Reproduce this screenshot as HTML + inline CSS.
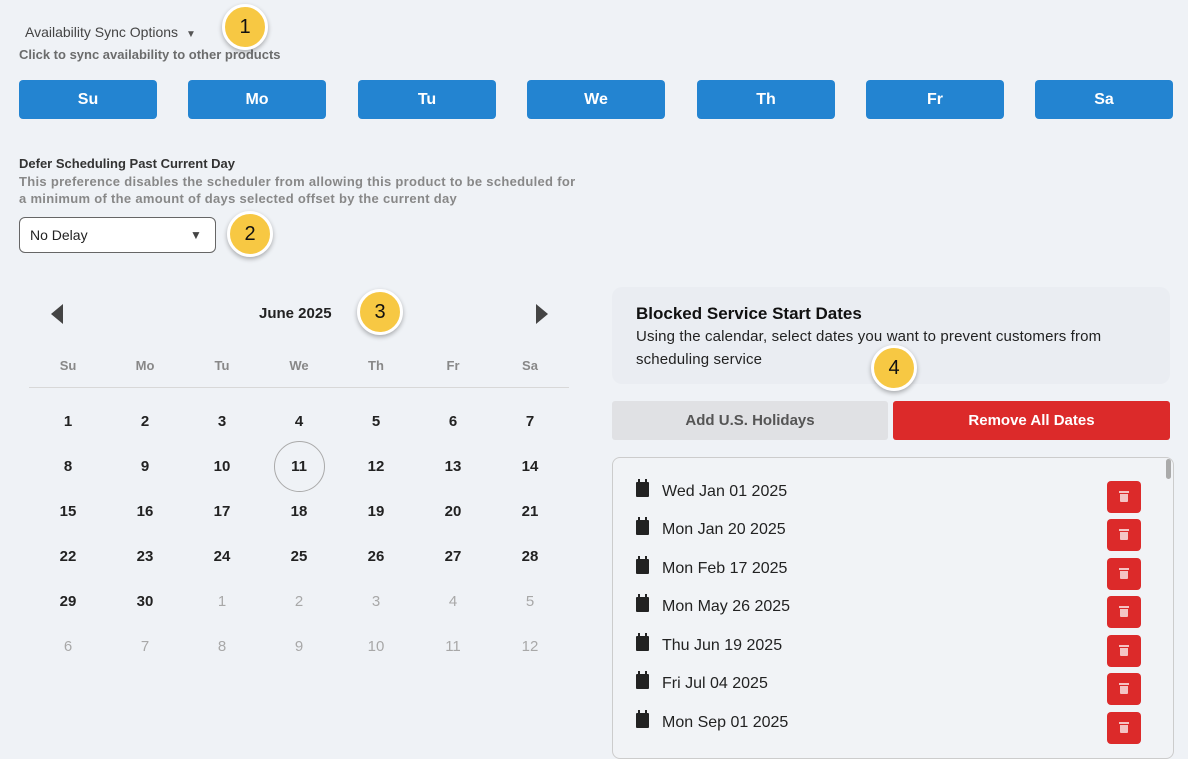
<!DOCTYPE html>
<html><head><style>
body{margin:0;width:1188px;height:749px;background:#eff2f6;font-family:"Liberation Sans",Arial,sans-serif;position:relative;overflow:hidden;color:#222}
.a{position:absolute}
.day{position:absolute;top:80px;width:138px;height:39px;background:#2384d1;border-radius:4px;color:#fff;font-weight:bold;font-size:16px;text-align:center;line-height:40px}
.badge{position:absolute;width:40px;height:40px;border-radius:50%;background:#f7c843;border:3px solid #fff;box-shadow:0 2px 5px rgba(0,0,0,.3);font-size:20px;text-align:center;line-height:40px;color:#111;z-index:5}
.c{position:absolute;width:40px;text-align:center;font-size:15px;font-weight:bold;color:#222}
.g{color:#a8a8a8;font-weight:normal}
.h{color:#888;font-size:13px;font-weight:bold}
.it{position:absolute;left:636px;font-size:16px;color:#222}
.cal{display:inline-block;width:13px;height:12px;background:#222;border-radius:1px;margin-right:13px;position:relative;top:1px;border-top:3px solid #222}
.cal:before,.cal:after{content:"";position:absolute;top:-6px;width:2px;height:4px;background:#222}
.cal:before{left:2px}.cal:after{right:2px}
.tr{position:absolute;left:1107px;width:34px;height:32px;background:#dc2a2a;border-radius:4px}
.tr:before{content:"";position:absolute;left:12px;top:10px;width:10px;height:2px;background:#f4c4c4}
.tr:after{content:"";position:absolute;left:13px;top:13px;width:8px;height:8px;background:#f4c4c4;border-radius:0 0 1px 1px}
</style></head><body>
<div class="a" style="left:25px;top:24px;font-size:14px;color:#444">Availability Sync Options <span style="font-size:10px;color:#555;margin-left:4px">&#9660;</span></div>
<div class="a" style="left:19px;top:47px;font-size:13px;color:#555;font-weight:bold;opacity:.85">Click to sync availability to other products</div>
<div class="day" style="left:19px">Su</div><div class="day" style="left:188px">Mo</div><div class="day" style="left:358px">Tu</div><div class="day" style="left:527px">We</div><div class="day" style="left:697px">Th</div><div class="day" style="left:866px">Fr</div><div class="day" style="left:1035px">Sa</div>
<div class="a" style="left:19px;top:156px;font-size:13px;font-weight:bold;color:#333">Defer Scheduling Past Current Day</div>
<div class="a" style="left:19px;top:173px;font-size:13px;font-weight:bold;color:#888;line-height:17px;letter-spacing:0.3px">This preference disables the scheduler from allowing this product to be scheduled for<br>a minimum of the amount of days selected offset by the current day</div>
<div class="a" style="left:19px;top:217px;width:195px;height:34px;background:#fff;border:1px solid #666;border-radius:6px"><span class="a" style="left:10px;top:9px;font-size:14px;color:#222">No Delay</span><span class="a" style="left:170px;top:10px;font-size:12px;color:#444">&#9660;</span></div>
<div class="badge" style="left:222px;top:4px">1</div>
<div class="badge" style="left:227px;top:211px">2</div>
<div class="badge" style="left:357px;top:289px">3</div>
<div class="badge" style="left:871px;top:345px">4</div>
<svg class="a" style="left:51px;top:304px" width="12" height="20"><path d="M12 0L0 10L12 20Z" fill="#444"/></svg>
<svg class="a" style="left:536px;top:304px" width="12" height="20"><path d="M0 0L12 10L0 20Z" fill="#444"/></svg>
<div class="a" style="left:259px;top:305px;font-size:15px;font-weight:bold">June 2025</div>
<div class="a" style="left:29px;top:387px;width:540px;height:1px;background:#d8d8d8"></div>
<div class="a" style="left:274px;top:441px;width:49px;height:49px;border:1px solid #aaa;border-radius:50%"></div>
<div id="cal"></div>
<div class="a" style="left:612px;top:287px;width:558px;height:97px;background:#eaedf2;border-radius:10px"></div>
<div class="a" style="left:636px;top:304px;font-size:17px;font-weight:bold;color:#111">Blocked Service Start Dates</div>
<div class="a" style="left:636px;top:325px;font-size:15px;color:#222;line-height:23px;letter-spacing:0.15px">Using the calendar, select dates you want to prevent customers from<br>scheduling service</div>
<div class="a" style="left:612px;top:401px;width:276px;height:39px;background:#e0e1e4;border-radius:3px;color:#555;font-weight:bold;font-size:15px;text-align:center;line-height:40px">Add U.S. Holidays</div>
<div class="a" style="left:893px;top:401px;width:277px;height:39px;background:#dc2a2a;border-radius:3px;color:#fff;font-weight:bold;font-size:15px;text-align:center;line-height:40px">Remove All Dates</div>
<div class="a" style="left:612px;top:457px;width:560px;height:300px;border:1px solid #ccc;border-radius:8px;background:#f1f3f6"></div>
<div class="a" style="left:1166px;top:459px;width:5px;height:20px;background:#aaa;border-radius:3px"></div>
<div class="it" style="top:481px"><span class="cal"></span>Wed Jan 01 2025</div>
<div class="it" style="top:519px"><span class="cal"></span>Mon Jan 20 2025</div>
<div class="it" style="top:558px"><span class="cal"></span>Mon Feb 17 2025</div>
<div class="it" style="top:596px"><span class="cal"></span>Mon May 26 2025</div>
<div class="it" style="top:635px"><span class="cal"></span>Thu Jun 19 2025</div>
<div class="it" style="top:673px"><span class="cal"></span>Fri Jul 04 2025</div>
<div class="it" style="top:712px"><span class="cal"></span>Mon Sep 01 2025</div>
<div class="tr" style="top:481px"></div><div class="tr" style="top:519px"></div><div class="tr" style="top:558px"></div><div class="tr" style="top:596px"></div><div class="tr" style="top:635px"></div><div class="tr" style="top:673px"></div><div class="tr" style="top:712px"></div>
<script>
var xs=[68,145,222,299,376,453,530],h=["Su","Mo","Tu","We","Th","Fr","Sa"],o="";
for(var i=0;i<7;i++)o+='<div class="c h" style="left:'+(xs[i]-20)+'px;top:358px">'+h[i]+'</div>';
for(var r=0;r<6;r++)for(var i=0;i<7;i++){var n=r*7+i+1,g=n>30;var t=g?n-30:n;o+='<div class="c'+(g?' g':'')+'" style="left:'+(xs[i]-20)+'px;top:'+(413+r*45)+'px">'+t+'</div>';}
document.getElementById("cal").innerHTML=o;
</script>
</body></html>
